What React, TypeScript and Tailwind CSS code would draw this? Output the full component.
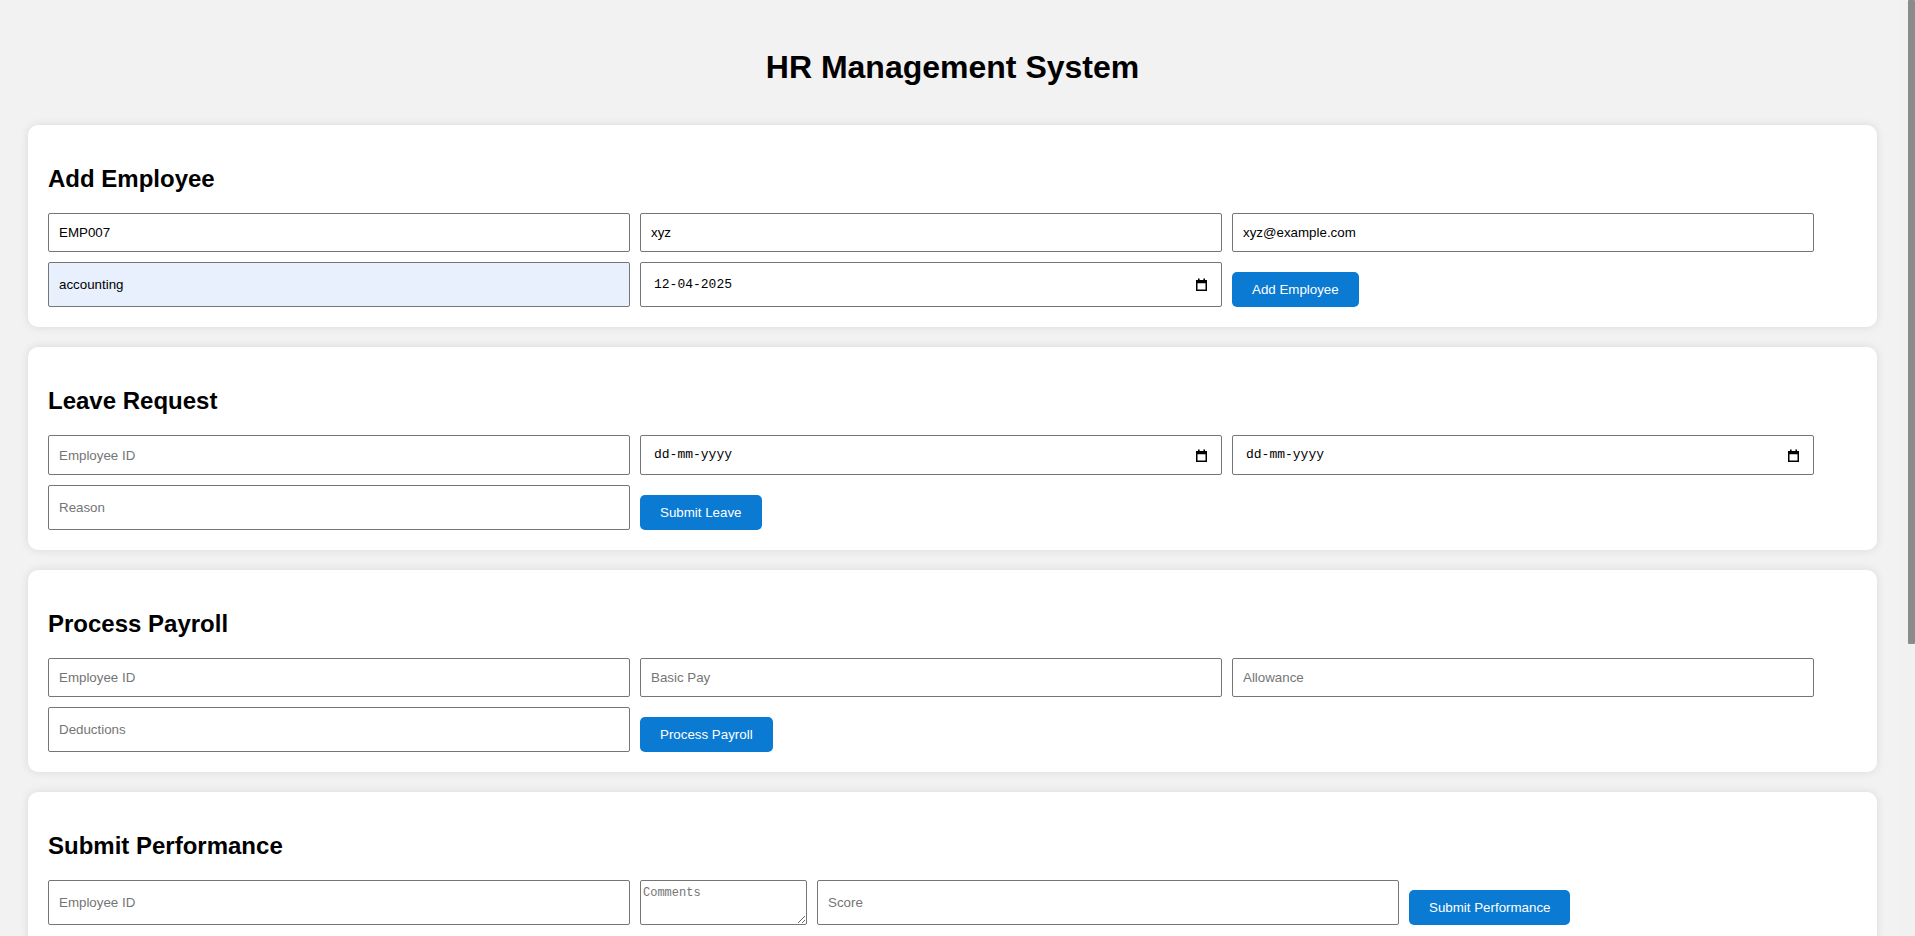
import React from "react";

function CalendarIcon() {
  return (
    <svg width="11" height="13" viewBox="0 0 11 13" aria-hidden="true">
      <rect x="0.75" y="2.75" width="9.5" height="9.5" fill="none" stroke="#000" strokeWidth="1.5" />
      <rect x="0.75" y="2.75" width="9.5" height="2.5" fill="#000" />
      <rect x="2" y="0.5" width="1.6" height="3" fill="#000" />
      <rect x="7.4" y="0.5" width="1.6" height="3" fill="#000" />
    </svg>
  );
}

function TextInput({
  placeholder,
  value,
  h,
  autofill,
}: {
  placeholder?: string;
  value?: string;
  h: string;
  autofill?: boolean;
}) {
  return (
    <input
      type="text"
      readOnly
      defaultValue={value}
      placeholder={placeholder}
      className={
        "w-[582px] shrink-0 border border-[#767676] rounded-[2px] px-[10px] text-[13.33px] text-black placeholder:text-[#757575] font-['Liberation_Sans',Arial,sans-serif] outline-none " +
        h +
        (autofill ? " bg-[#e8f0fe]" : " bg-white")
      }
    />
  );
}

function DateField({ value, h }: { value?: string; h: string }) {
  return (
    <div
      className={
        "w-[582px] shrink-0 border border-[#767676] rounded-[2px] bg-white flex items-center justify-between pl-[13px] pr-[14px] " +
        h
      }
    >
      <span className="text-[13px] text-black font-['Liberation_Mono',monospace]">
        {value ?? "dd-mm-yyyy"}
      </span>
      <CalendarIcon />
    </div>
  );
}

function Btn({ label }: { label: string }) {
  return (
    <button
      type="button"
      className="mt-[10px] h-[35px] px-[20px] shrink-0 rounded-[5px] bg-[#0a7ad3] text-white text-[13.33px] font-['Liberation_Sans',Arial,sans-serif]"
    >
      {label}
    </button>
  );
}

function Card({ title, children }: { title: string; children: React.ReactNode }) {
  return (
    <section className="bg-white rounded-[10px] shadow-[0_0_10px_rgba(0,0,0,0.1)] p-[20px] mb-[20px]">
      <h2 className="mt-[20px] mb-[20px] text-[24px] leading-[28px] font-bold text-black">{title}</h2>
      <div className="flex flex-col gap-[10px]">{children}</div>
    </section>
  );
}

export default function App() {
  return (
    <div className="min-h-screen bg-[#f2f2f2] font-['Liberation_Sans',Arial,sans-serif]">
      <div className="pl-[28px] pr-[38px] pt-[49px] pb-[20px]">
        <h1 className="text-center text-[32px] leading-[37px] font-bold text-black mb-[39px]">
          HR Management System
        </h1>

        <Card title="Add Employee">
          <div className="flex gap-[10px]">
            <TextInput value="EMP007" h="h-[39px]" />
            <TextInput value="xyz" h="h-[39px]" />
            <TextInput value="xyz@example.com" h="h-[39px]" />
          </div>
          <div className="flex gap-[10px] items-start">
            <TextInput value="accounting" h="h-[45px]" autofill />
            <DateField value="12-04-2025" h="h-[45px]" />
            <Btn label="Add Employee" />
          </div>
        </Card>

        <Card title="Leave Request">
          <div className="flex gap-[10px]">
            <TextInput placeholder="Employee ID" h="h-[40px]" />
            <DateField h="h-[40px]" />
            <DateField h="h-[40px]" />
          </div>
          <div className="flex gap-[10px] items-start">
            <TextInput placeholder="Reason" h="h-[45px]" />
            <Btn label="Submit Leave" />
          </div>
        </Card>

        <Card title="Process Payroll">
          <div className="flex gap-[10px]">
            <TextInput placeholder="Employee ID" h="h-[39px]" />
            <TextInput placeholder="Basic Pay" h="h-[39px]" />
            <TextInput placeholder="Allowance" h="h-[39px]" />
          </div>
          <div className="flex gap-[10px] items-start">
            <TextInput placeholder="Deductions" h="h-[45px]" />
            <Btn label="Process Payroll" />
          </div>
        </Card>

        <Card title="Submit Performance">
          <div className="flex gap-[10px] items-start">
            <TextInput placeholder="Employee ID" h="h-[45px]" />
            <textarea
              readOnly
              placeholder="Comments"
              className="w-[167px] h-[45px] shrink-0 border border-[#767676] rounded-[2px] px-[2px] pt-[5px] pb-[2px] text-[12px] leading-[14px] bg-white text-black placeholder:text-[#757575] font-['Liberation_Mono',monospace] outline-none resize"
            />
            <TextInput placeholder="Score" h="h-[45px]" />
            <Btn label="Submit Performance" />
          </div>
        </Card>
      </div>

      {/* scrollbar lookalike */}
      <div className="fixed top-0 right-0 h-screen w-[15px] bg-[#f1f1f1] flex justify-end">
        <div className="w-[7px] h-[644px] bg-[#8b8b8b] rounded-[1px]" />
      </div>
    </div>
  );
}
